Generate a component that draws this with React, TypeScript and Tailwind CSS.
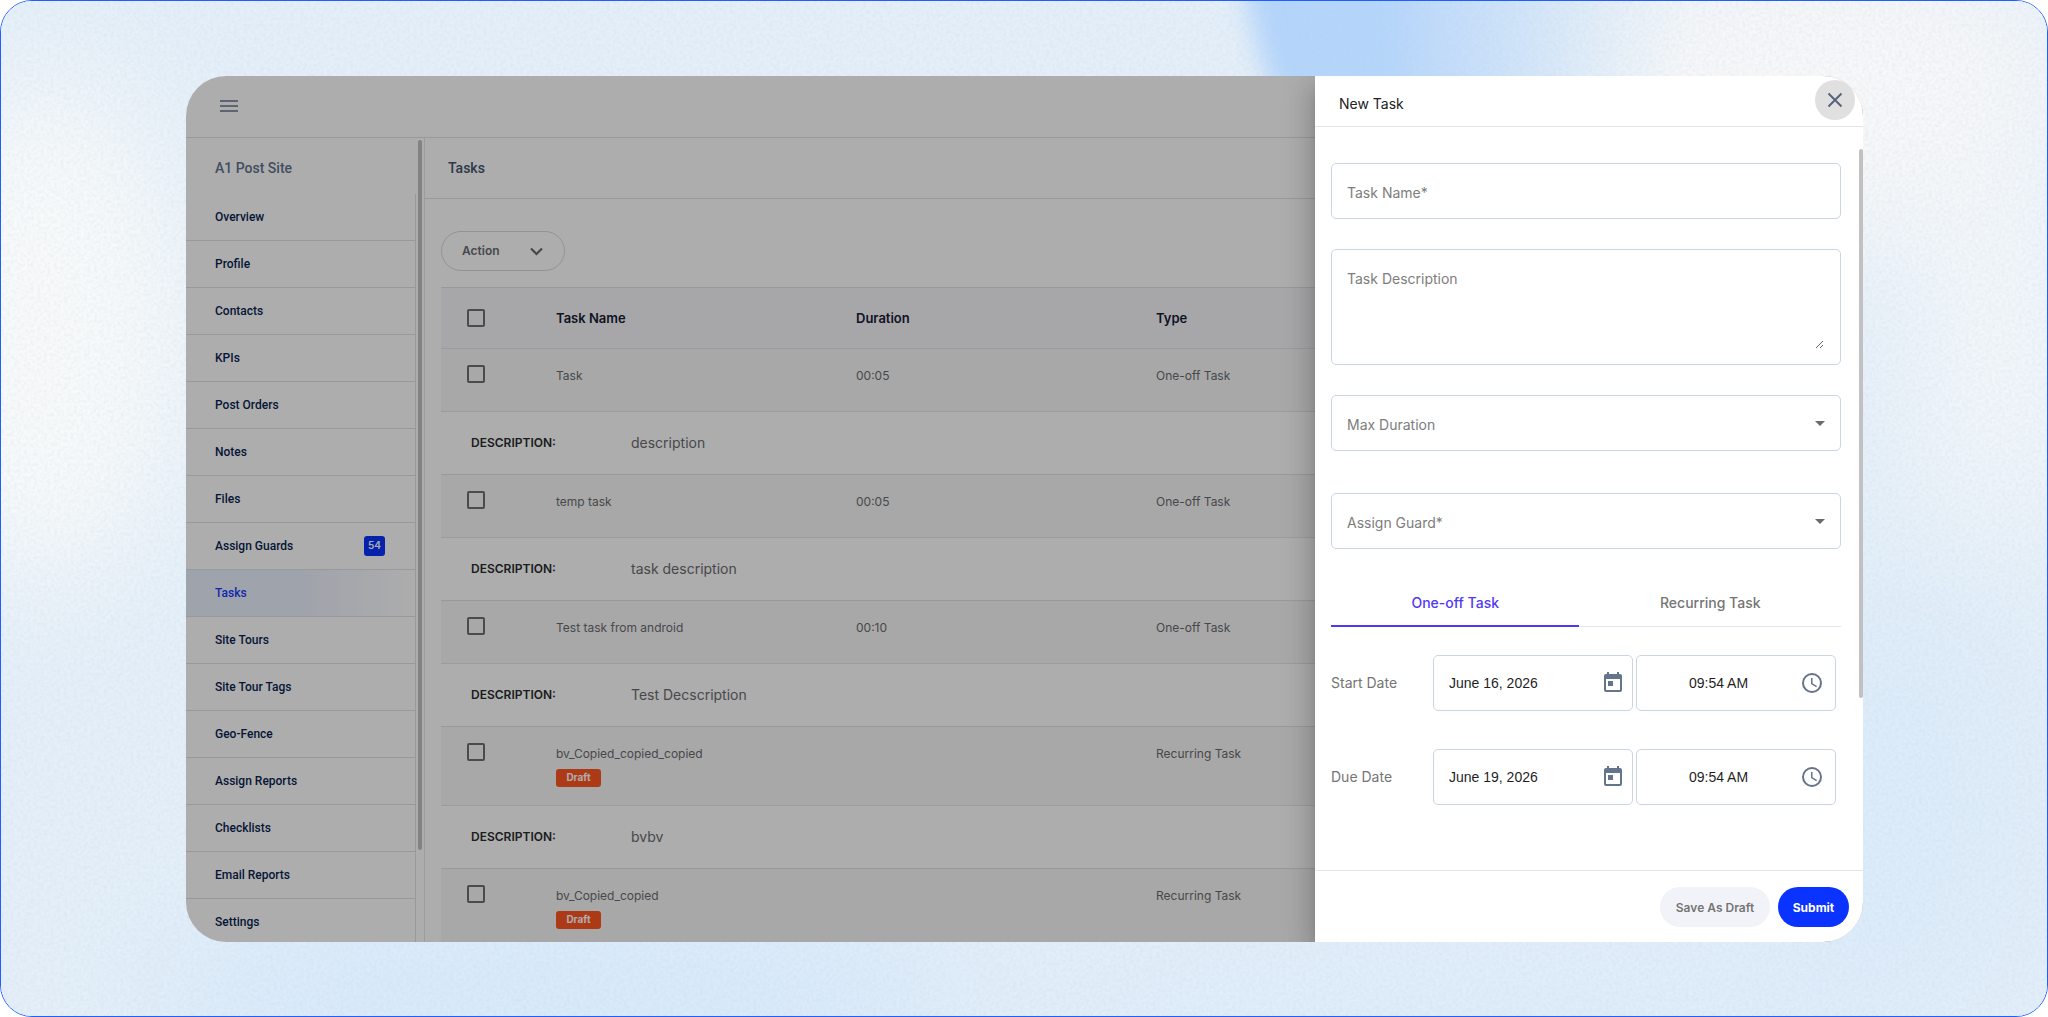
import type { ReactNode } from 'react'

interface NavItem {
    label: string
    count?: number
    active?: boolean
}

interface Task {
    id: number
    name: string
    duration?: string
    type: string
    description?: string
    draft?: boolean
}

const navItems: NavItem[] = [
    { label: 'Overview' },
    { label: 'Profile' },
    { label: 'Contacts' },
    { label: 'KPIs' },
    { label: 'Post Orders' },
    { label: 'Notes' },
    { label: 'Files' },
    { label: 'Assign Guards', count: 54 },
    { label: 'Tasks', active: true },
    { label: 'Site Tours' },
    { label: 'Site Tour Tags' },
    { label: 'Geo-Fence' },
    { label: 'Assign Reports' },
    { label: 'Checklists' },
    { label: 'Email Reports' },
    { label: 'Settings' },
]

const tasks: Task[] = [
    { id: 1, name: 'Task', duration: '00:05', type: 'One-off Task', description: 'description' },
    { id: 2, name: 'temp task', duration: '00:05', type: 'One-off Task', description: 'task description' },
    { id: 3, name: 'Test task from android', duration: '00:10', type: 'One-off Task', description: 'Test Decscription' },
    { id: 4, name: 'bv_Copied_copied_copied', type: 'Recurring Task', description: 'bvbv', draft: true },
    { id: 5, name: 'bv_Copied_copied', type: 'Recurring Task', draft: true },
]

function Backdrop() {
    return (
        <svg
            className="absolute inset-0 h-full w-full"
            viewBox="0 0 2048 1017"
            preserveAspectRatio="none"
            aria-hidden="true"
        >
            <defs>
                <filter id="soft" x="-50%" y="-50%" width="200%" height="200%">
                    <feGaussianBlur stdDeviation="60" />
                </filter>
                <filter id="edge" x="-20%" y="-20%" width="140%" height="140%">
                    <feGaussianBlur stdDeviation="13" />
                </filter>
                <filter id="grain" x="0" y="0" width="100%" height="100%">
                    <feTurbulence type="fractalNoise" baseFrequency="0.3" numOctaves="2" seed="4" />
                    <feColorMatrix values="0 0 0 0 0.5  0 0 0 0 0.58  0 0 0 0 0.66  0.35 0 0 0 -0.12" />
                </filter>
                <linearGradient id="beam" x1="0" y1="0" x2="1" y2="0">
                    <stop offset="0" stopColor="#b3d4fc" />
                    <stop offset="0.32" stopColor="#b4d5fc" />
                    <stop offset="0.62" stopColor="#cbe1fa" stopOpacity="0.8" />
                    <stop offset="1" stopColor="#e6eff8" stopOpacity="0" />
                </linearGradient>
            </defs>
            <rect width="2048" height="1017" fill="#e4eff9" />
            <g filter="url(#soft)">
                <ellipse cx="40" cy="330" rx="150" ry="260" fill="#f8fafa" />
                <ellipse cx="1830" cy="90" rx="260" ry="150" fill="#f7f8f9" />
                <ellipse cx="2000" cy="330" rx="90" ry="220" fill="#f3f7fa" />
                <ellipse cx="1900" cy="820" rx="140" ry="240" fill="#ddecfa" />
                <ellipse cx="560" cy="1000" rx="420" ry="90" fill="#d7e9fb" />
                <ellipse cx="1500" cy="1010" rx="500" ry="70" fill="#deecfb" />
            </g>
            <path d="M1235 -60 L1700 -60 L1640 160 L1302 160 Q1254 60 1235 -60Z" fill="url(#beam)" filter="url(#edge)" />
            <rect width="2048" height="1017" filter="url(#grain)" />
        </svg>
    )
}

function Checkbox({ label }: { label: string }) {
    return (
        <input
            type="checkbox"
            aria-label={label}
            className="block size-[18px] appearance-none rounded-xs border-2 border-[#6f6f72]"
        />
    )
}

function Sidebar() {
    return (
        <aside className="flex w-[239px] shrink-0 border-r border-slate-200 font-[Roboto,sans-serif] font-medium">
            <div className="flex w-[230px] flex-col">
                <h2 className="flex h-14 shrink-0 items-center pt-1 pl-[29px] text-sm text-slate-500">A1 Post Site</h2>
                <nav className="flex-1 border-r border-[#e2e2e2]">
                    {navItems.map((item) => (
                        <a
                            key={item.label}
                            href="#"
                            className={
                                item.active
                                    ? 'flex h-[47px] items-center border-b border-[#e2e2e2] bg-linear-to-r from-[#ebf0fd] from-50% to-white pl-[29px] text-xs text-[#1b38ff]'
                                    : 'flex h-[47px] items-center justify-between border-b border-[#e2e2e2] pr-[30px] pl-[29px] text-xs text-[#0a1f52]'
                            }
                        >
                            {item.label}
                            {item.count && (
                                <span className="flex h-5 w-[21px] items-center justify-center rounded-[3px] bg-[#0a33ff] font-[Inter,sans-serif] text-[10px] font-semibold text-white">
                                    {item.count}
                                </span>
                            )}
                        </a>
                    ))}
                </nav>
            </div>
            <div className="mt-0.5 ml-0.5 h-[710px] w-1 rounded-full bg-[#c1c1c1]" />
        </aside>
    )
}

function TaskRows({ task }: { task: Task }) {
    return (
        <>
            <tr className={task.draft ? 'h-[79px] bg-[#f8f8f8]' : 'h-[63px] bg-[#f8f8f8]'}>
                <td className="border-b border-slate-200 pt-4 pl-[26px] align-top">
                    <Checkbox label={`Select ${task.name}`} />
                </td>
                <td className="border-b border-slate-200 pt-[19px] align-top">
                    {task.name}
                    {task.draft && (
                        <span className="mt-[7px] flex h-[18px] w-[45px] items-center justify-center rounded-[3px] bg-[#ff5622] text-[10px] font-bold text-white">
                            Draft
                        </span>
                    )}
                </td>
                <td className="border-b border-slate-200 pt-[19px] align-top">{task.duration}</td>
                <td className="border-b border-slate-200 pt-[19px] align-top">{task.type}</td>
            </tr>
            {task.description && (
                <tr className="h-[63px]">
                    <td colSpan={4} className="border-b border-[#e2e2e2] pl-[30px]">
                        <div className="flex items-center">
                            <span className="w-40 font-semibold text-[#2b2b2f]">DESCRIPTION:</span>
                            <span className="text-sm">{task.description}</span>
                        </div>
                    </td>
                </tr>
            )}
        </>
    )
}

function TaskList() {
    return (
        <section className="min-w-0 flex-1">
            <h1 className="flex h-[61px] items-center border-b border-[#e2e2e2] pl-[23px] font-[Roboto,sans-serif] text-sm font-medium text-slate-600">
                Tasks
            </h1>
            <div className="px-4 pt-8">
                <button
                    type="button"
                    className="flex h-10 w-[124px] items-center justify-between rounded-full border border-[#d9d9d9] pr-5 pl-5 text-xs font-semibold text-[#6b6b70]"
                >
                    Action
                    <svg className="size-4" viewBox="0 0 16 16" fill="none" stroke="currentColor" strokeWidth="2.2">
                        <path d="M3 5.5 8.500 11 14 5.500" />
                    </svg>
                </button>
                <table className="mt-4 w-full table-fixed border-separate border-spacing-0 border-t border-[#e2e2e2] text-left text-xs text-[#6b6b70]">
                    <colgroup>
                        <col className="w-[115px]" />
                        <col className="w-[300px]" />
                        <col className="w-[300px]" />
                        <col />
                    </colgroup>
                    <thead>
                        <tr className="h-[61px] bg-[#f6f6fa] text-[13px] text-[#172033]">
                            <th className="border-b border-slate-200 pl-[26px]">
                                <Checkbox label="Select all tasks" />
                            </th>
                            <th className="border-b border-slate-200 pt-0.5 font-semibold">Task Name</th>
                            <th className="border-b border-slate-200 pt-0.5 font-semibold">Duration</th>
                            <th className="border-b border-slate-200 pt-0.5 font-semibold">Type</th>
                        </tr>
                    </thead>
                    <tbody>
                        {tasks.map((task) => (
                            <TaskRows key={task.id} task={task} />
                        ))}
                    </tbody>
                </table>
            </div>
        </section>
    )
}

function SelectField({ id, label }: { id: string; label: string }) {
    return (
        <div className="flex h-14 items-center rounded-[5px] border border-slate-300 pr-[15px] pl-[15px]">
            <select
                id={id}
                aria-label={label}
                defaultValue=""
                className="h-full min-w-0 flex-1 appearance-none pt-1 text-sm text-[#7d7d7d] outline-none"
            >
                <option value="">{label}</option>
            </select>
            <svg className="h-[5px] w-2.5" viewBox="0 0 10 5" fill="#6b6b6b">
                <path d="M0 0h10L5 5z" />
            </svg>
        </div>
    )
}

function IconBox({ children }: { children: ReactNode }) {
    return (
        <div className="flex h-14 w-[200px] items-center rounded-[5px] border border-slate-300 font-['Liberation_Sans',Arial,sans-serif] text-sm text-[#1f1f1f]">
            {children}
        </div>
    )
}

function DateRow({ label, id, date, time }: { label: string; id: string; date: string; time: string }) {
    return (
        <div className="flex items-center">
            <label htmlFor={id} className="w-[102px] text-sm text-[#757575]">
                {label}
            </label>
            <div className="flex gap-[3px]">
                <IconBox>
                    <input id={id} defaultValue={date} className="min-w-0 flex-1 pl-[15px] outline-none" />
                    <button type="button" aria-label={`Pick ${label}`} className="mr-[7px]">
                        <svg className="size-6" viewBox="0 0 24 24" fill="#64748b">
                            <path d="M19 3h-1V1h-2v2H8V1H6v2H5a2 2 0 0 0-2 2v14a2 2 0 0 0 2 2h14a2 2 0 0 0 2-2V5a2 2 0 0 0-2-2zm0 16H5V8h14v11zM7 10h5v5H7z" />
                        </svg>
                    </button>
                </IconBox>
                <IconBox>
                    <input
                        defaultValue={time}
                        aria-label={`${label} time`}
                        className="min-w-0 flex-1 text-center outline-none"
                    />
                    <button type="button" aria-label={`Pick ${label} time`} className="mr-[11px]">
                        <svg className="size-6" viewBox="0 0 24 24" fill="#64748b">
                            <path d="M12 2a10 10 0 1 0 0 20 10 10 0 0 0 0-20zm0 18a8 8 0 1 1 0-16 8 8 0 0 1 0 16zm.5-13H11v6l5.250 3.150.75-1.230-4.500-2.670z" />
                        </svg>
                    </button>
                </IconBox>
            </div>
        </div>
    )
}

function NewTaskDrawer() {
    return (
        <form className="absolute inset-y-0 right-0 flex w-[548px] max-w-full flex-col bg-white shadow-[0_8px_10px_-5px_rgba(0,0,0,0.2),0_16px_24px_2px_rgba(0,0,0,0.14),0_6px_30px_5px_rgba(0,0,0,0.12)]">
            <header className="flex h-[51px] shrink-0 items-start justify-between border-b border-[#e5e5e5] pt-1 pr-2 pl-6">
                <h2 className="pt-3.5 text-sm leading-5 text-[#222]">New Task</h2>
                <button
                    type="button"
                    aria-label="Close"
                    className="flex size-10 items-center justify-center rounded-full bg-[#e0e0e0]"
                >
                    <svg className="size-6" viewBox="0 0 24 24" fill="none" stroke="#56657c" strokeWidth="2">
                        <path d="M5.500 5.500l13 13M18.500 5.500l-13 13" />
                    </svg>
                </button>
            </header>
            <div className="flex min-h-0 flex-1 justify-between pl-4">
                <div className="w-[510px] pt-9">
                    <div className="h-14 rounded-[5px] border border-slate-300">
                        <input
                            aria-label="Task Name"
                            placeholder="Task Name*"
                            className="h-full w-full px-[15px] pt-0.5 text-sm outline-none placeholder:text-[#7d7d7d]"
                        />
                    </div>
                    <div className="mt-[30px] h-[116px] rounded-[5px] border border-slate-300 pt-[19px] pr-4 pl-[15px]">
                        <textarea
                            aria-label="Task Description"
                            placeholder="Task Description"
                            className="block h-20 w-full resize-y text-sm leading-5 outline-none placeholder:text-[#7d7d7d]"
                        />
                    </div>
                    <div className="mt-[30px]">
                        <SelectField id="max-duration" label="Max Duration" />
                    </div>
                    <div className="mt-[42px]">
                        <SelectField id="assign-guard" label="Assign Guard*" />
                    </div>
                    <div role="tablist" className="mt-[30px] flex h-12 border-b border-slate-200 text-sm">
                        <button
                            type="button"
                            role="tab"
                            aria-selected="true"
                            className="-mb-px flex-auto border-b-2 border-indigo-600 pt-0.5 font-medium text-indigo-600"
                        >
                            One-off Task
                        </button>
                        <button type="button" role="tab" aria-selected="false" className="flex-auto font-medium text-[#757575]">
                            Recurring Task
                        </button>
                    </div>
                    <div className="mt-7 flex flex-col gap-[38px]">
                        <DateRow id="start-date" label="Start Date" date="June 16, 2026" time="09:54 AM" />
                        <DateRow id="due-date" label="Due Date" date="June 19, 2026" time="09:54 AM" />
                    </div>
                </div>
                <div className="mt-[22px] h-[549px] w-1 rounded-full bg-[#c1c1c1]" />
            </div>
            <footer className="flex h-[72px] shrink-0 items-start justify-end gap-2 border-t border-[#e5e5e5] pt-4 pr-3.5">
                <button
                    type="button"
                    className="h-10 w-[110px] rounded-full bg-[#f2f3f8] pt-0.5 text-xs font-semibold text-[#757575]"
                >
                    Save As Draft
                </button>
                <button
                    type="submit"
                    className="h-10 w-[71px] rounded-full bg-[#0a33ff] pt-0.5 text-xs font-bold text-white"
                >
                    Submit
                </button>
            </footer>
        </form>
    )
}

export default function App() {
    return (
        <div className="relative flex h-screen overflow-hidden rounded-[32px] border border-[#1f5eff] pt-[75px] pr-[184px] pb-[74px] pl-[185px] font-[Inter,sans-serif]">
            <Backdrop />
            <main className="relative flex min-w-0 flex-1 flex-col overflow-hidden rounded-[40px] bg-white">
                <header className="flex h-[62px] shrink-0 items-center border-b border-[#e2e2e2] pb-0.5 pl-[34px]">
                    <button type="button" aria-label="Menu">
                        <svg className="h-3 w-[18px]" viewBox="0 0 18 12" fill="none" stroke="#64748b" strokeWidth="1.5">
                            <path d="M0 1h18M0 6h18M0 11h18" />
                        </svg>
                    </button>
                </header>
                <div className="flex min-h-0 flex-1">
                    <Sidebar />
                    <TaskList />
                </div>
                <div className="absolute inset-0 bg-black/32" />
                <NewTaskDrawer />
            </main>
        </div>
    )
}
